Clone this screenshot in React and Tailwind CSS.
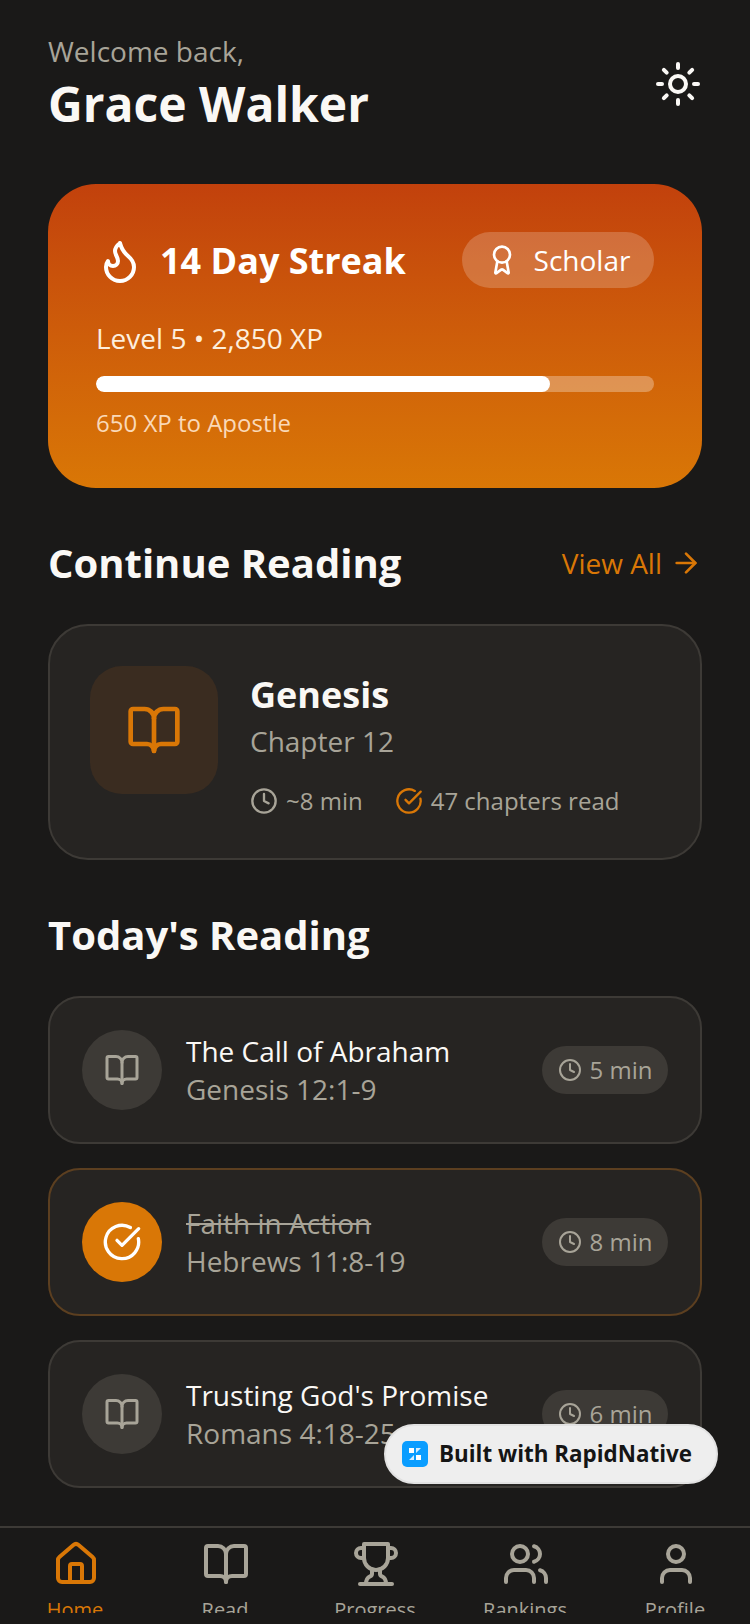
import { ArrowRight, Award, BookOpen, CircleCheckBig, Clock, Flame, House, Sun, User, Users } from "lucide-react";

const TrophyIcon = ({ size = 48, className }) => (
  <svg width={size} height={size} viewBox="0 0 24 24" fill="none" stroke="currentColor" strokeWidth="2" strokeLinecap="round" strokeLinejoin="round" className={className}>
    <path d="M6 9H4.5a2.5 2.5 0 0 1 0-5H6" />
    <path d="M18 9h1.5a2.5 2.5 0 0 0 0-5H18" />
    <path d="M4 22h16" />
    <path d="M10 14.66V17c0 .55-.47.98-.97 1.21C7.85 18.75 7 20.24 7 22" />
    <path d="M14 14.66V17c0 .55.47.98.97 1.21C16.15 18.75 17 20.24 17 22" />
    <path d="M18 2H6v7a6 6 0 0 0 12 0V2Z" />
  </svg>
);

const readings = [
  { title: "The Call of Abraham", verse: "Genesis 12:1-9", time: "5 min" },
  { title: "Faith in Action", verse: "Hebrews 11:8-19", time: "8 min", done: true },
  { title: "Trusting God's Promise", verse: "Romans 4:18-25", time: "6 min" },
];

const tabs = [
  { label: "Home", Icon: House, active: true },
  { label: "Read", Icon: BookOpen },
  { label: "Progress", Icon: TrophyIcon },
  { label: "Rankings", Icon: Users },
  { label: "Profile", Icon: User },
];

const ReadingCard = ({ title, verse, time, done }) => (
  <div className={`h-[148px] rounded-[32px] border-2 bg-[#262422] px-[32px] flex items-center ${done ? "border-[#5c3f20]" : "border-[#3d3a36]"}`}>
    <div className={`w-[80px] h-[80px] rounded-full flex items-center justify-center shrink-0 ${done ? "bg-[#d97706]" : "bg-[#3d3a36]"}`}>
      {done ? (
        <CircleCheckBig size={40} strokeWidth={2} className="text-white" />
      ) : (
        <BookOpen size={36} strokeWidth={2} className="text-[#a8a498]" />
      )}
    </div>
    <div className="ml-[24px] flex-1 min-w-0">
      <div className={`text-[28px] leading-[38px] whitespace-nowrap ${done ? "line-through text-[#a8a498]" : "text-[#faf8f5]"}`}>{title}</div>
      <div className="text-[28px] leading-[38px] text-[#a8a498] whitespace-nowrap">{verse}</div>
    </div>
    <div className="h-[48px] w-[126px] rounded-full bg-[#3d3a36] flex items-center justify-center gap-[8px] text-[24px] text-[#a8a498] shrink-0">
      <Clock size={24} strokeWidth={2} />
      {time}
    </div>
  </div>
);

const App = () => {
  return (
    <div className="relative w-[750px] h-[1624px] overflow-hidden bg-[#1a1918] flex flex-col font-['Open_Sans',sans-serif]">
      <div className="flex-1 min-h-0 px-[48px]">
        <div className="flex items-start justify-between pt-[31px]">
          <div>
            <div className="text-[28px] leading-[41px] text-[#a8a498]">Welcome back,</div>
            <div className="text-[48px] leading-[64px] font-bold text-[#faf8f5]">Grace Walker</div>
          </div>
          <div className="mt-[29px]">
            <Sun size={48} strokeWidth={2} className="text-[#faf8f5]" />
          </div>
        </div>

        <div className="mt-[48px] h-[304px] rounded-[48px] bg-gradient-to-b from-[#c2410c] to-[#d97706] px-[48px] pt-[48px]">
          <div className="flex items-center justify-between">
            <div className="flex items-center gap-[16px] mt-[2px]">
              <Flame size={48} strokeWidth={2} className="text-white" />
              <span className="text-[36px] leading-[48px] font-bold text-white">14 Day Streak</span>
            </div>
            <div className="h-[56px] w-[192px] rounded-full bg-white/20 flex items-center justify-center gap-[16px]">
              <Award size={32} strokeWidth={2} className="text-white" />
              <span className="text-[28px] text-white">Scholar</span>
            </div>
          </div>
          <div className="mt-[30px] text-[28px] leading-[40px] text-[#fdeedd]">Level 5 • 2,850 XP</div>
          <div className="mt-[18px] h-[16px] rounded-full bg-white/30 overflow-hidden">
            <div className="h-full w-[81.3%] rounded-full bg-white" />
          </div>
          <div className="mt-[15px] text-[24px] leading-[32px] text-[#fad9b8]">650 XP to Apostle</div>
        </div>

        <div className="mt-[47px] flex items-center justify-between">
          <div className="text-[40px] leading-[56px] font-bold text-[#faf8f5]">Continue Reading</div>
          <div className="flex items-center gap-[8px] text-[28px] text-[#d97706]">
            View All
            <ArrowRight size={32} strokeWidth={2} />
          </div>
        </div>

        <div className="mt-[33px] h-[236px] rounded-[40px] border-2 border-[#3d3a36] bg-[#262422] pl-[40px] pt-[40px] flex items-start">
          <div className="w-[128px] h-[128px] rounded-[32px] bg-[#3a2c20] flex items-center justify-center shrink-0">
            <BookOpen size={56} strokeWidth={2} className="text-[#d97706]" />
          </div>
          <div className="ml-[32px]">
            <div className="text-[36px] leading-[48px] font-bold text-[#faf8f5] mt-[5px]">Genesis</div>
            <div className="text-[28px] leading-[40px] text-[#a8a498] mt-[2px]">Chapter 12</div>
            <div className="mt-[22px] flex items-center gap-[32px] text-[24px] text-[#a8a498]">
              <div className="flex items-center gap-[8px]">
                <Clock size={28} strokeWidth={2} />
                ~8 min
              </div>
              <div className="flex items-center gap-[8px]">
                <CircleCheckBig size={28} strokeWidth={2} className="text-[#d97706]" />
                47 chapters read
              </div>
            </div>
          </div>
        </div>

        <div className="mt-[47px] text-[40px] leading-[56px] font-bold text-[#faf8f5]">Today's Reading</div>

        <div className="mt-[33px] flex flex-col gap-[24px]">
          {readings.map((r) => (
            <ReadingCard key={r.title} {...r} />
          ))}
        </div>
      </div>

      <div className="h-[98px] shrink-0 border-t-2 border-[#3d3a36] bg-[#1a1918] flex">
        {tabs.map(({ label, Icon, active }) => (
          <div key={label} className={`w-[150px] flex flex-col items-center pt-[12px] h-[85px] overflow-hidden ${active ? "text-[#d97706]" : "text-[#a8a498]"}`}>
            <Icon size={48} strokeWidth={2} className="shrink-0 ml-[2px]" />
            <span className="mt-[8px] text-[20px] leading-[28px]">{label}</span>
          </div>
        ))}
      </div>

      <div className="absolute left-[384px] top-[1424px] w-[334px] h-[60px] rounded-full bg-[#eeeeee] border-2 border-[#e2e2e2] flex items-center pl-[16px] gap-[11px]">
        <svg width="26" height="26" viewBox="0 0 26 26">
          <rect width="26" height="26" rx="5" fill="#0a9dff" />
          <path d="M7 7h5v5H7zM14 14h5v5h-5z" fill="#ffffff" />
          <path d="M14 7h5l-5 5zM12 14v5H7z" fill="#d5eeff" />
        </svg>
        <span className="text-[22.4px] font-bold text-[#151515] whitespace-nowrap">Built with RapidNative</span>
      </div>
    </div>
  );
};

export default App;
